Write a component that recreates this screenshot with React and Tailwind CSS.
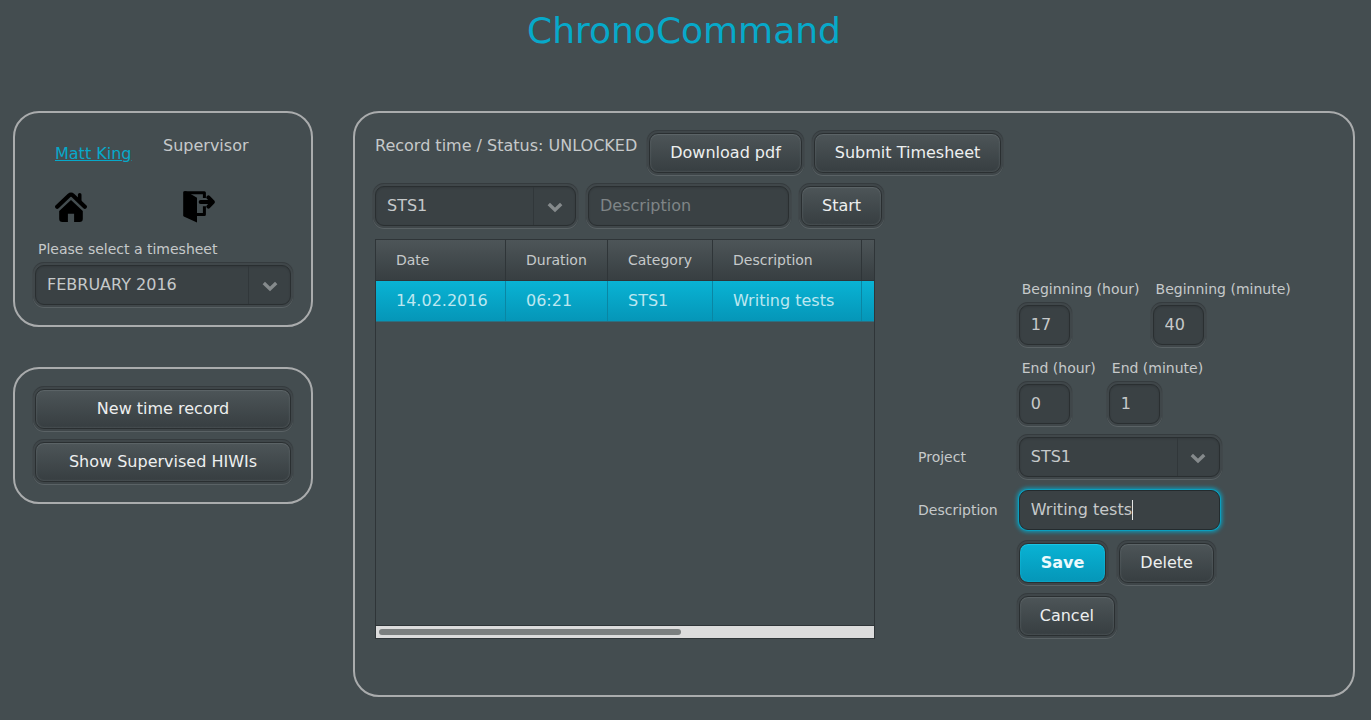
import React, { useState } from "react";

const ring =
  "shadow-[inset_0_1px_2px_rgba(0,0,0,0.12),0_0_0_2px_#40474a,0_-1px_0_2px_#353b3e,0_1px_0_2px_#5a6265,0_0_0_3px_#41484b]";

const raised =
  "shadow-[inset_0_1px_0_#5b6366,inset_0_0_2px_#687073,0_0_0_2px_#3f4649,0_-1px_0_2px_#353b3e,0_1px_0_2px_#5a6265,0_0_0_3px_#41484b]";

const raisedPrimary =
  "shadow-[inset_0_1px_0_#1cc4e2,inset_0_0_2px_#1cc4e2,0_0_0_2px_#3f4649,0_-1px_0_2px_#353b3e,0_1px_0_2px_#5a6265,0_0_0_3px_#41484b]";

const focusRing = "shadow-[0_0_0_1px_#0b9fbe,0_0_4px_2px_#0b9fbe]";

function Button({ children, primary, className = "" }) {
  const look = primary
    ? `px-[21px] font-bold text-[#ecfafd] bg-linear-to-b from-[#09b3d4] to-[#0596b8] ${raisedPrimary}`
    : `px-5 text-[#edefef] bg-linear-to-b from-[#4d5558] to-[#373e41] ${raised}`;
  return (
    <button
      type="button"
      className={`h-10 rounded-[9px] border border-[#2a2f31] bg-clip-padding leading-6 ${look} ${className}`}
    >
      {children}
    </button>
  );
}

function TextField({ className = "", ...props }) {
  return (
    <input
      type="text"
      className={`h-10 rounded-[9px] border border-[#2a2f31] bg-[#3a4144] px-[11px] pb-0.5 text-[#c6c9ca] outline-none placeholder:text-[#7f8587] ${ring} ${className}`}
      {...props}
    />
  );
}

function Select({ options, className = "", ...props }) {
  return (
    <div className={`relative h-10 rounded-[9px] border border-[#2a2f31] bg-[#3a4144] ${ring} ${className}`}>
      <select
        className="h-full w-full appearance-none bg-transparent pr-12 pl-[11px] text-[#c6c9ca] outline-none"
        {...props}
      >
        {options.map((o) => (
          <option key={o}>{o}</option>
        ))}
      </select>
      <div className="pointer-events-none absolute inset-y-0 right-0 flex w-[42px] items-center justify-center border-l border-[#31373a] pt-1">
        <svg width="16" height="12" viewBox="0 0 16 12" fill="none" stroke="#858a8c" strokeWidth="3.4">
          <path d="M1.8 2 8 8l6.2-6" />
        </svg>
      </div>
    </div>
  );
}

function Captioned({ id, caption, children }) {
  return (
    <div>
      <label htmlFor={id} className="block pb-[6px] pl-[3px] text-sm leading-5">
        {caption}
      </label>
      {children}
    </div>
  );
}

function HomeIcon() {
  return (
    <svg width="32" height="32" viewBox="0 0 32 32" aria-hidden="true">
      <path d="M2.2 15.8 14 4.5q2-1.7 4 0l11.8 11.3" fill="none" stroke="#000" strokeWidth="4.2" strokeLinecap="round" />
      <path d="M24.7 3.8v6" fill="none" stroke="#000" strokeWidth="3.6" strokeLinecap="round" />
      <path d="M16 9 27.8 20v7.8a3.2 3.2 0 0 1-3.2 3.2h-5.5v-8.2h-6.2V31H7.4a3.2 3.2 0 0 1-3.2-3.2V20z" fill="#000" />
    </svg>
  );
}

function LogoutIcon() {
  return (
    <svg width="32" height="32" viewBox="0 0 32 32" aria-hidden="true">
      <path d="M.2 1.2q0-1 1-1H3l11 6.6V31.6L.8 25.4a1 1 0 0 1-.6-1z" fill="#000" />
      <path d="M1.4 1.7h20v5.2M21.4 15.2v8.4H13" fill="none" stroke="#000" strokeWidth="3" strokeLinejoin="round" />
      <path d="M17.6 11H29" fill="none" stroke="#000" strokeWidth="3.8" strokeLinecap="round" />
      <path d="M25.4 6.4 29.8 11l-4.4 4.6" fill="none" stroke="#000" strokeWidth="4" strokeLinecap="round" strokeLinejoin="round" />
    </svg>
  );
}

const panel = "rounded-[26px] border-2 border-[#aaacad] px-5 py-5";

const headCell = "h-[41px] border-r border-b border-[#2f3538] px-5 text-left text-sm font-normal";
const bodyCell = "h-10 border-r border-[#0a86a3] px-5";

function RecordsTable() {
  return (
    <div className="flex h-[400px] w-[500px] flex-col border border-[#2f3538]">
      <table className="w-full table-fixed border-separate border-spacing-0">
        <colgroup>
          <col className="w-[130px]" />
          <col className="w-[102px]" />
          <col className="w-[105px]" />
          <col className="w-[149px]" />
          <col />
        </colgroup>
        <thead>
          <tr className="bg-linear-to-b from-[#4d5558] to-[#373e41]">
            <th className={headCell}>Date</th>
            <th className={headCell}>Duration</th>
            <th className={headCell}>Category</th>
            <th className={headCell}>Description</th>
            <td className="border-b border-[#2f3538] p-0" />
          </tr>
        </thead>
        <tbody>
          <tr className="bg-linear-to-b from-[#09b3d4] to-[#0596b8] text-[#bce7f0]">
            <td className={bodyCell}>14.02.2016</td>
            <td className={bodyCell}>06:21</td>
            <td className={bodyCell}>STS1</td>
            <td className={bodyCell}>Writing tests</td>
            <td className="p-0" />
          </tr>
        </tbody>
      </table>
      <div className="flex-1 border-t border-[#2c6f80]" />
      <div className="flex h-[13px] items-center border-t border-[#2f3538] bg-[#dcdcdc] px-[3px]">
        <div className="h-[6px] w-[302px] rounded-full bg-[#7b7f7f]" />
      </div>
    </div>
  );
}

function FocusedDescription() {
  const [value, setValue] = useState("Writing tests");
  return (
    <div className="relative">
      <input
        id="record-description"
        type="text"
        value={value}
        onChange={(e) => setValue(e.target.value)}
        className={`block h-10 w-full rounded-[9px] border border-[#242b2e] bg-[#3a4144] px-[11px] pb-0.5 text-[#c6c9ca] caret-transparent outline-none ${focusRing}`}
      />
      <div className="pointer-events-none absolute inset-0 flex items-center pl-3" aria-hidden="true">
        <span className="border-r border-[#e4e6e6] leading-5 whitespace-pre text-transparent">{value}</span>
      </div>
    </div>
  );
}

function RecordForm() {
  return (
    <form className="mt-10 ml-[43px] grid grid-cols-[auto_1fr] content-start items-center gap-x-[21px] gap-y-[13px]">
      <div className="col-start-2 flex gap-[13px]">
        <Captioned id="begin-hour" caption="Beginning (hour)">
          <TextField id="begin-hour" defaultValue="17" className="block w-[51px]" />
        </Captioned>
        <Captioned id="begin-minute" caption="Beginning (minute)">
          <TextField id="begin-minute" defaultValue="40" className="block w-[51px]" />
        </Captioned>
      </div>
      <div className="col-start-2 flex gap-[13px]">
        <Captioned id="end-hour" caption="End (hour)">
          <TextField id="end-hour" defaultValue="0" className="block w-[51px]" />
        </Captioned>
        <Captioned id="end-minute" caption="End (minute)">
          <TextField id="end-minute" defaultValue="1" className="block w-[51px]" />
        </Captioned>
      </div>
      <label htmlFor="record-project" className="text-sm">
        Project
      </label>
      <Select id="record-project" options={["STS1"]} className="w-[201px]" />
      <label htmlFor="record-description" className="text-sm">
        Description
      </label>
      <div className="w-[201px]">
        <FocusedDescription />
      </div>
      <div className="col-start-2 flex w-[201px] flex-wrap gap-[13px]">
        <Button primary>Save</Button>
        <Button>Delete</Button>
        <Button>Cancel</Button>
      </div>
    </form>
  );
}

export default function App() {
  return (
    <div className="min-h-screen bg-[#444d50] pr-4 pb-[23px] pl-[13px] font-['DejaVu_Sans',sans-serif] text-base leading-6 text-[#c6c9ca]">
      <header className="pt-2 pb-[57px]">
        <h1 className="text-center text-[36px] leading-[46px] text-[#07a9ca]">ChronoCommand</h1>
      </header>
      <div className="flex items-start gap-10">
        <aside className="flex w-[300px] shrink-0 flex-col gap-10">
          <section className={panel}>
            <div className="grid grid-cols-[108px_1fr] pt-px pl-5">
              <div className="pt-2">
                <a href="#profile" className="text-[#07a9ca] underline">
                  Matt King
                </a>
              </div>
              <div>Supervisor</div>
            </div>
            <nav className="mt-[25px] mb-4 grid grid-cols-[128px_1fr] pl-5">
              <a href="#home" aria-label="Home" className="w-8">
                <HomeIcon />
              </a>
              <a href="#logout" aria-label="Log out" className="w-8">
                <LogoutIcon />
              </a>
            </nav>
            <Captioned id="timesheet" caption="Please select a timesheet">
              <Select id="timesheet" options={["FEBRUARY 2016"]} />
            </Captioned>
          </section>
          <section className={`${panel} flex flex-col gap-[13px]`}>
            <Button>New time record</Button>
            <Button>Show Supervised HIWIs</Button>
          </section>
        </aside>
        <main className="min-w-0 flex-1 rounded-[26px] border-2 border-[#aaacad] px-5 pt-5 pb-14">
          <div className="flex items-start gap-3">
            <p className="pt-px">Record time / Status: UNLOCKED</p>
            <Button>Download pdf</Button>
            <Button>Submit Timesheet</Button>
          </div>
          <div className="mt-[13px] flex gap-3">
            <Select aria-label="Project" options={["STS1"]} className="w-[201px]" />
            <TextField aria-label="Description" placeholder="Description" className="w-[201px]" />
            <Button>Start</Button>
          </div>
          <div className="mt-[13px] flex items-start">
            <RecordsTable />
            <RecordForm />
          </div>
        </main>
      </div>
    </div>
  );
}
